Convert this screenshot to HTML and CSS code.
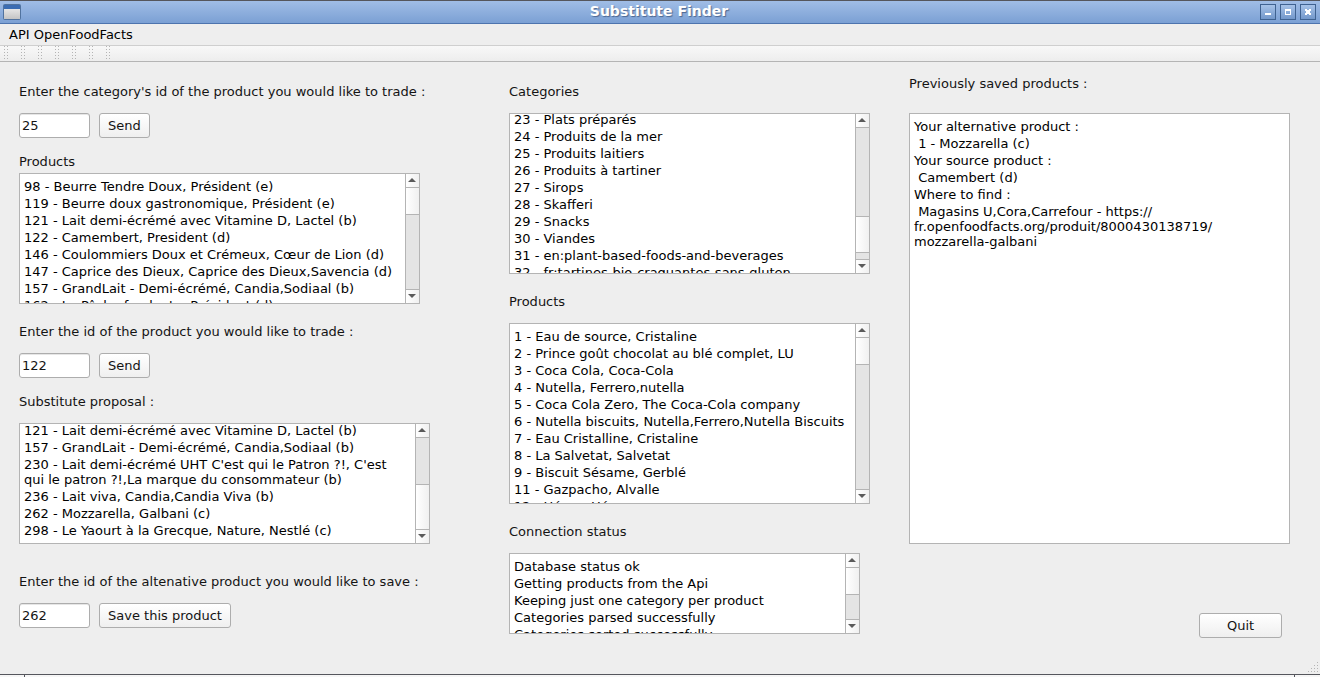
FILE: index.html
```html
<!DOCTYPE html>
<html lang="en">
<head>
<meta charset="utf-8">
<title>Substitute Finder</title>
<link rel="stylesheet" href="styles.css">
</head>
<body>
<header class="titlebar">
  <svg class="app-icon" width="18" height="17" viewBox="0 0 18 17" aria-hidden="true">
    <defs><linearGradient id="pane" x1="0" y1="0" x2="0" y2="1"><stop offset="0" stop-color="#e6e6e6"/><stop offset="1" stop-color="#c4c4c4"/></linearGradient></defs>
    <rect x="0.5" y="0.5" width="17" height="15" rx="1" fill="#6d8fbd" stroke="#51739f"/>
    <rect x="1" y="1" width="16" height="4" fill="#3b6cb2"/>
    <rect x="1" y="5" width="16" height="10" fill="url(#pane)"/>
  </svg>
  <h1 class="title">Substitute Finder</h1>
  <div class="window-buttons">
    <button class="window-button" type="button" aria-label="Minimize"><svg width="14" height="14" viewBox="0 0 14 14" shape-rendering="crispEdges"><rect x="4" y="8" width="6" height="2" fill="#fff"/></svg></button>
    <button class="window-button" type="button" aria-label="Maximize"><svg width="14" height="14" viewBox="0 0 14 14" shape-rendering="crispEdges"><path d="M4 4h6v6H4zM5 6v3h4V6z" fill="#fff" fill-rule="evenodd"/></svg></button>
    <button class="window-button" type="button" aria-label="Close"><svg width="14" height="14" viewBox="0 0 14 14" shape-rendering="crispEdges"><path d="M4 4h2v1h2V4h2v2H9v2h1v2H8V9H6v1H4V8h1V6H4z" fill="#fff"/></svg></button>
  </div>
</header>
<nav class="menubar"><button class="menu" type="button">API OpenFoodFacts</button></nav>
<div class="toolbar" role="toolbar" aria-label="Tools">
  <span class="handle"></span><span class="handle"></span><span class="handle"></span><span class="handle"></span><span class="handle"></span><span class="handle"></span><span class="handle"></span>
</div>
<main class="content">
  <section class="column column-trade">
    <label class="label" for="category">Enter the category's id of the product you would like to trade :</label>
    <div class="row space-small"><input class="field" id="category" type="text" value="25"><button class="button" type="button">Send</button></div>
    <h2 class="label label-tight">Products</h2>
    <div class="listbox list-category narrow space">
      <ul class="lines">
        <li>98 - Beurre Tendre Doux, Président (e)</li>
        <li>119 - Beurre doux gastronomique, Président (e)</li>
        <li>121 - Lait demi-écrémé avec Vitamine D, Lactel (b)</li>
        <li>122 - Camembert, President (d)</li>
        <li>146 - Coulommiers Doux et Crémeux, Cœur de Lion (d)</li>
        <li>147 - Caprice des Dieux, Caprice des Dieux,Savencia (d)</li>
        <li>157 - GrandLait - Demi-écrémé, Candia,Sodiaal (b)</li>
        <li>162 - Le Pâche fondante, Président (d)</li>
      </ul>
      <div class="scrollbar"><span class="arrow up"></span><span class="track"><span class="thumb"></span></span><span class="arrow down"></span></div>
    </div>
    <label class="label" for="product">Enter the id of the product you would like to trade :</label>
    <div class="row space-small"><input class="field" id="product" type="text" value="122"><button class="button" type="button">Send</button></div>
    <h2 class="label">Substitute proposal :</h2>
    <div class="listbox list-substitute space-large">
      <ul class="lines scrolled">
        <li>121 - Lait demi-écrémé avec Vitamine D, Lactel (b)</li>
        <li>157 - GrandLait - Demi-écrémé, Candia,Sodiaal (b)</li>
        <li>230 - Lait demi-écrémé UHT C'est qui le Patron ?!, C'est qui le patron ?!,La marque du consommateur (b)</li>
        <li>236 - Lait viva, Candia,Candia Viva (b)</li>
        <li>262 - Mozzarella, Galbani (c)</li>
        <li>298 - Le Yaourt à la Grecque, Nature, Nestlé (c)</li>
      </ul>
      <div class="scrollbar"><span class="arrow up"></span><span class="track at-end"><span class="thumb thumb-half"></span></span><span class="arrow down"></span></div>
    </div>
    <label class="label" for="save">Enter the id of the altenative product you would like to save :</label>
    <div class="row"><input class="field" id="save" type="text" value="262"><button class="button" type="button">Save this product</button></div>
  </section>
  <section class="column column-data">
    <h2 class="label">Categories</h2>
    <div class="listbox list-categories space">
      <ul class="lines scrolled-more">
        <li>23 - Plats préparés</li>
        <li>24 - Produits de la mer</li>
        <li>25 - Produits laitiers</li>
        <li>26 - Produits à tartiner</li>
        <li>27 - Sirops</li>
        <li>28 - Skafferi</li>
        <li>29 - Snacks</li>
        <li>30 - Viandes</li>
        <li>31 - en:plant-based-foods-and-beverages</li>
        <li>32 - fr:tartines-bio-craquantes-sans-gluten</li>
      </ul>
      <div class="scrollbar"><span class="arrow up"></span><span class="track near-end"><span class="thumb thumb-third"></span></span><span class="arrow down"></span></div>
    </div>
    <h2 class="label">Products</h2>
    <div class="listbox list-products space">
      <ul class="lines">
        <li>1 - Eau de source, Cristaline</li>
        <li>2 - Prince goût chocolat au blé complet, LU</li>
        <li>3 - Coca Cola, Coca-Cola</li>
        <li>4 - Nutella, Ferrero,nutella</li>
        <li>5 - Coca Cola Zero, The Coca-Cola company</li>
        <li>6 - Nutella biscuits, Nutella,Ferrero,Nutella Biscuits</li>
        <li>7 - Eau Cristalline, Cristaline</li>
        <li>8 - La Salvetat, Salvetat</li>
        <li>9 - Biscuit Sésame, Gerblé</li>
        <li>11 - Gazpacho, Alvalle</li>
        <li>12 - Hépar, Hépar</li>
      </ul>
      <div class="scrollbar"><span class="arrow up"></span><span class="track"><span class="thumb"></span></span><span class="arrow down"></span></div>
    </div>
    <h2 class="label">Connection status</h2>
    <div class="listbox list-status narrow">
      <ul class="lines">
        <li>Database status ok</li>
        <li>Getting products from the Api</li>
        <li>Keeping just one category per product</li>
        <li>Categories parsed successfully</li>
        <li>Categories sorted successfully</li>
      </ul>
      <div class="scrollbar"><span class="arrow up"></span><span class="track"><span class="thumb"></span></span><span class="arrow down"></span></div>
    </div>
  </section>
  <section class="column column-saved">
    <h2 class="label label-saved">Previously saved products :</h2>
    <div class="listbox list-saved">
      <ul class="lines">
        <li>Your alternative product :</li>
        <li> 1 - Mozzarella (c)</li>
        <li>Your source product :</li>
        <li> Camembert (d)</li>
        <li>Where to find :</li>
        <li> Magasins U,Cora,Carrefour - https://<wbr>fr.openfoodfacts.org/produit/8000430138719/<wbr>mozzarella-galbani</li>
      </ul>
    </div>
    <button class="button quit" type="button">Quit</button>
  </section>
</main>
<footer class="window-edge">
  <svg class="grip" width="12" height="12" viewBox="0 0 12 12" shape-rendering="crispEdges" aria-hidden="true"><path d="M10 1h1v1h-1zM7 4h1v1H7zM10 4h1v1h-1zM4 7h1v1H4zM7 7h1v1H7zM10 7h1v1h-1zM1 10h1v1H1zM4 10h1v1H4zM7 10h1v1H7zM10 10h1v1h-1z" fill="#b4b4b4"/></svg>
</footer>
</body>
</html>
```
FILE: styles.css
```css
* { box-sizing: border-box; }

body {
  margin: 0;
  min-height: 100vh;
  display: flex;
  flex-direction: column;
  background: #eeeeee;
  color: #141414;
  font: 13px/15px "DejaVu Sans", sans-serif;
}

button, input { font: inherit; color: inherit; margin: 0; }
h1, h2, ul { margin: 0; padding: 0; font: inherit; }

.titlebar {
  display: flex;
  align-items: center;
  height: 24px;
  padding: 0 4px 0 3px;
  background: linear-gradient(#a0bde6, #7ba0d4);
  border-top: 1px solid #55565c;
  border-bottom: 1px solid #4d74ae;
}
.title {
  flex: 1;
  padding: 0 0 2px 37px;
  text-align: center;
  font-size: 14px;
  line-height: 17px;
  font-weight: bold;
  color: #ffffff;
  text-shadow: 1px 1px 1px #4b6792;
}
.window-buttons { display: flex; gap: 4px; }
.window-button {
  width: 16px;
  height: 16px;
  padding: 0;
  border: 1px solid #3f6291;
  background: linear-gradient(#a6c2e8, #7398cb);
}
.window-button svg { display: block; }

.menubar { height: 22px; padding: 0 9px; border-bottom: 1px solid #cfcfcf; }
.menu { display: block; padding: 3px 0; border: 0; background: none; color: #000000; }

.toolbar {
  display: flex;
  gap: 13px;
  height: 16px;
  padding-left: 4px;
  background: linear-gradient(#f8f8f8, #ededed);
  border-bottom: 1px solid #b4b4b4;
}
.handle {
  width: 4px;
  background: repeating-linear-gradient(#b4b4b4 0 1px, transparent 1px 3px) 0 0 / 1px 100% no-repeat,
    repeating-linear-gradient(#b4b4b4 0 1px, transparent 1px 3px) 3px 0 / 1px 100% no-repeat;
}

.content {
  flex: 1;
  display: grid;
  grid-template-columns: 490fr 400fr 411fr;
  padding-left: 19px;
}
.column { min-width: 0; padding-top: 22px; }
.column-trade { padding-right: 79px; }
.column-data { padding-right: 39px; }
.column-saved { padding: 14px 30px 0 0; display: flex; flex-direction: column; }

.label { display: block; margin-bottom: 14px; }
.label-tight { margin-bottom: 4px; }
.label-saved { margin-bottom: 22px; }
.space-small { margin-bottom: 16px; }
.space { margin-bottom: 20px; }
.space-large { margin-bottom: 30px; }
.narrow { margin-right: 10px; }

.row { display: flex; gap: 9px; }
.field {
  width: 71px;
  height: 25px;
  padding: 0 2px;
  border: 1px solid #adadad;
  border-radius: 3px;
  background: #ffffff;
  box-shadow: inset 0 1px 0 #e6e6e6;
}
.button {
  height: 25px;
  padding: 0 8px;
  border: 1px solid #adadad;
  border-radius: 3px;
  background: linear-gradient(#ffffff, #efefef);
}
.quit { align-self: flex-end; width: 83px; margin: 69px 8px 0 0; }

.listbox {
  display: flex;
  overflow: hidden;
  border: 1px solid #b4b4b4;
  background: #ffffff;
  color: #000000;
}
.lines { flex: 1; min-width: 0; padding: 5px 6px 0 4px; list-style: none; }
.lines li { margin-bottom: 2px; white-space: pre-wrap; }
.lines.scrolled { padding-top: 0; margin-top: -1px; }
.lines.scrolled-more { padding-top: 0; margin-top: -2px; }
.list-category { height: 131px; }
.list-substitute { height: 121px; }
.list-categories { height: 161px; }
.list-products { height: 181px; }
.list-status { height: 81px; }
.list-saved { height: 431px; }

.scrollbar {
  display: flex;
  flex-direction: column;
  width: 14px;
  border-left: 1px solid #b4b4b4;
}
.arrow {
  display: flex;
  justify-content: center;
  height: 14px;
  padding-top: 4px;
  background: linear-gradient(90deg, #ffffff, #f0f0f0);
}
.arrow::before { content: ""; width: 0; height: 0; margin-right: 1px; border: 4px solid transparent; }
.up { border-bottom: 1px solid #b4b4b4; }
.up::before { border-top-width: 0; border-bottom-color: #5a5a5a; }
.down { border-top: 1px solid #b4b4b4; }
.down::before { border-bottom-width: 0; border-top-color: #5a5a5a; }
.track { flex: 1; display: flex; flex-direction: column; background: #e4e4e4; }
.thumb {
  height: 27px;
  border-bottom: 1px solid #b4b4b4;
  background: linear-gradient(90deg, #ffffff, #f0f0f0);
}
.at-end { justify-content: flex-end; }
.near-end { justify-content: flex-end; padding-bottom: 6px; }
.thumb-half { height: 45px; border-top: 1px solid #b4b4b4; border-bottom: 0; }
.thumb-third { height: 37px; border-top: 1px solid #b4b4b4; }

.window-edge {
  position: relative;
  height: 3px;
  border-top: 1px solid #55565c;
  background: linear-gradient(#55565c, #55565c) 24px 0 / 1px 2px no-repeat,
    linear-gradient(#55565c, #55565c) calc(100% - 25px) 0 / 1px 2px no-repeat, #f6f6f6;
}
.grip { position: absolute; right: 1px; bottom: 4px; }
```
